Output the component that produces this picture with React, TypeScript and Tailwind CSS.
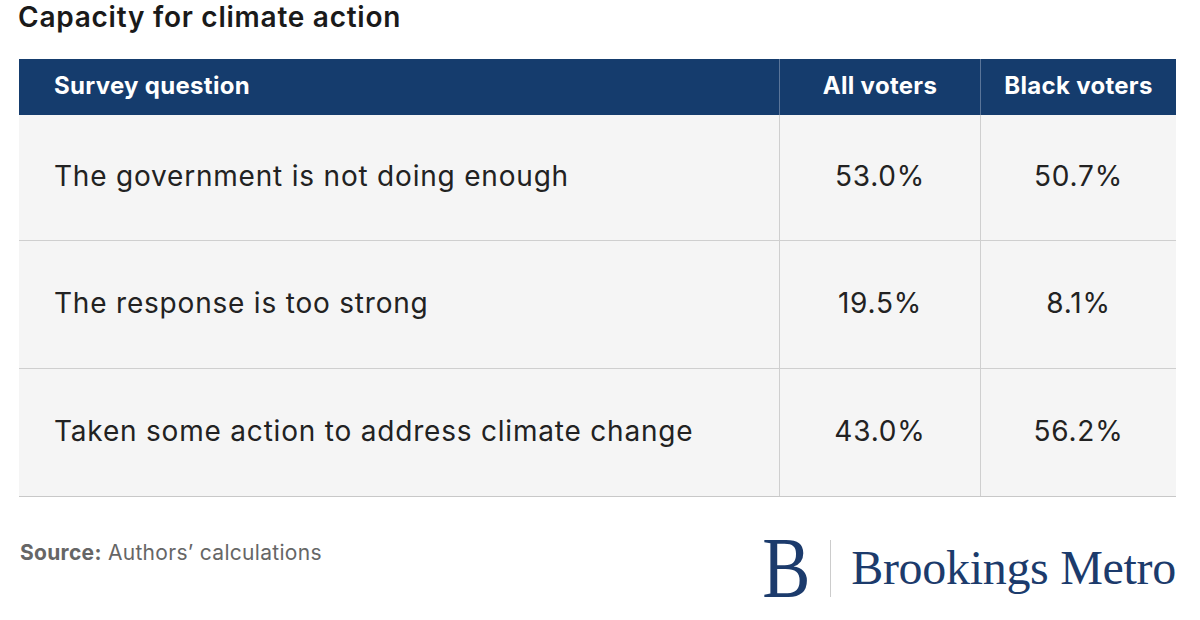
import React from 'react';

interface Row {
    question: string;
    all: string;
    black: string;
    height: string;
}

const rows: Row[] = [
    { question: 'The government is not doing enough', all: '53.0%', black: '50.7%', height: 'h-[125px]' },
    { question: 'The response is too strong', all: '19.5%', black: '8.1%', height: 'h-[128px]' },
    { question: 'Taken some action to address climate change', all: '43.0%', black: '56.2%', height: 'h-[128px]' },
];

const cols = 'grid grid-cols-[760px_201px_196px]';

export default function App() {
    return (
        <div className="w-[1200px] h-[620px] bg-white font-['Inter',sans-serif] text-[#222]">
            {/* Title */}
            <h1 className="pl-[18px] pt-[1px] text-[28px] leading-[32px] font-semibold tracking-[0.75px] text-[#1a1a1a]">
                Capacity for climate action
            </h1>

            {/* Table */}
            <div className="ml-[19px] mt-[26px] w-[1157px] border-b border-[#c8c8c8]">
                <div className={`${cols} h-[56px] bg-[#153c6d] text-white text-[24px] font-bold tracking-[0.3px]`}>
                    <div className="flex items-center pl-[35px] pb-[3px]">Survey question</div>
                    <div className="flex items-center justify-center pb-[3px] border-l border-[#5a7599]">All voters</div>
                    <div className="flex items-center justify-center pb-[3px] border-l border-[#5a7599]">Black voters</div>
                </div>
                {rows.map((row, i) => (
                    <div
                        key={row.question}
                        className={`${cols} ${row.height} bg-[#f5f5f5] text-[28px] tracking-[0.8px] ${i > 0 ? 'border-t border-[#cfcfcf]' : ''}`}
                    >
                        <div className="flex items-center pl-[35px] pb-[3px]">{row.question}</div>
                        <div className="flex items-center justify-center pb-[3px] border-l border-[#cfcfcf]">{row.all}</div>
                        <div className="flex items-center justify-center pb-[3px] border-l border-[#cfcfcf]">{row.black}</div>
                    </div>
                ))}
            </div>

            {/* Footer */}
            <div className="flex items-start justify-between pl-[20px] w-[1176px] mt-[28px]">
                <p className="mt-[14px] text-[21px] leading-[28px] tracking-[0.3px] text-[#666]">
                    <span className="font-bold">Source:</span> Authors’ calculations
                </p>
                <div className="flex items-center text-[#1c3b6c] font-['Liberation_Serif',serif]">
                    <span className="text-[86px] leading-none inline-block scale-x-[0.84] origin-right">B</span>
                    <span className="mx-[20px] w-px h-[57px] bg-[#cccccc]" />
                    <span className="text-[48px] leading-none tracking-[-0.3px]">Brookings Metro</span>
                </div>
            </div>
        </div>
    );
}
